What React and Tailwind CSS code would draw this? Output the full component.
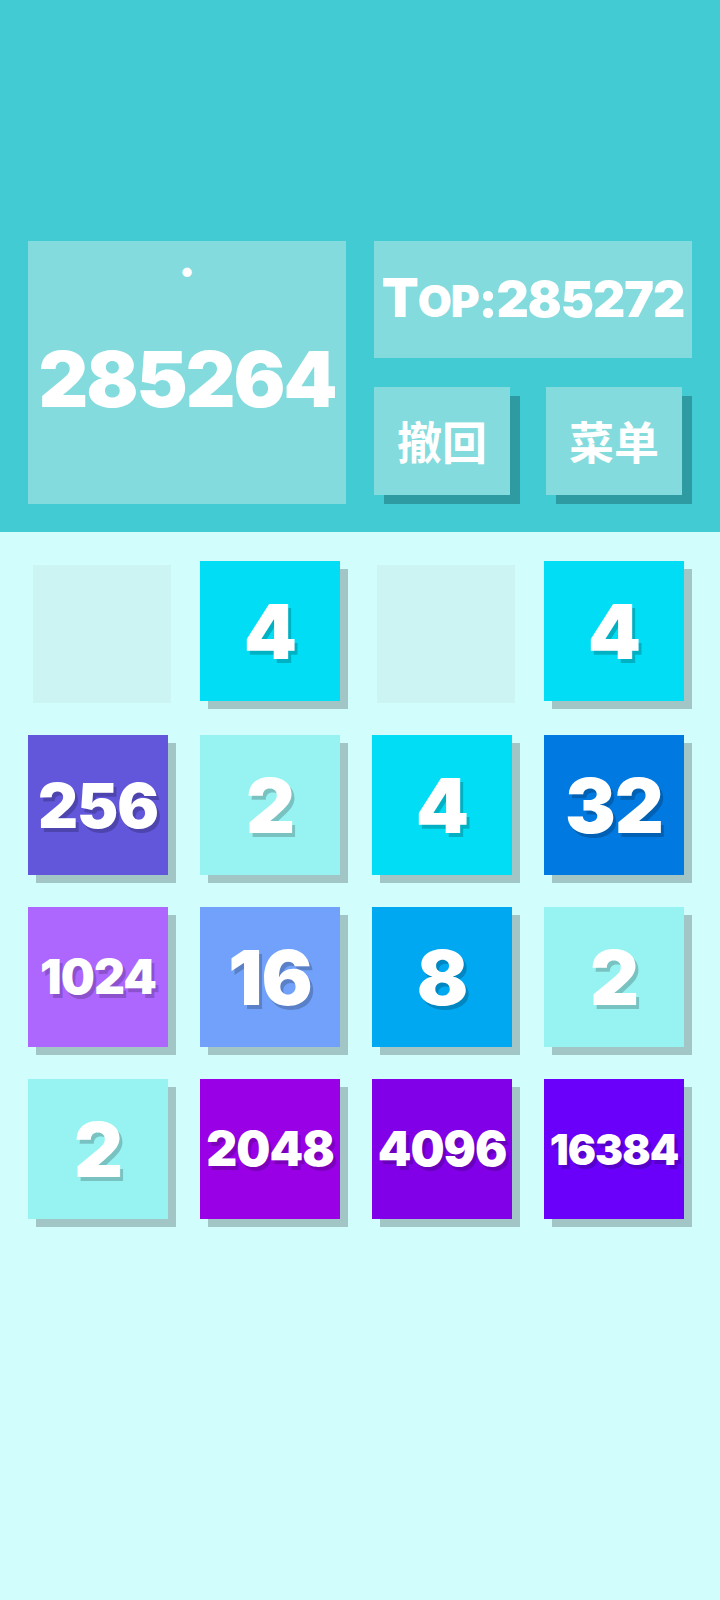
import React from 'react';

const tileColors = {
  2: 'bg-[#97f3f2]',
  4: 'bg-[#00ddf4]',
  8: 'bg-[#00a8f1]',
  16: 'bg-[#71a1fa]',
  32: 'bg-[#0079e0]',
  256: 'bg-[#6256da]',
  1024: 'bg-[#ad66fe]',
  2048: 'bg-[#9900e6]',
  4096: 'bg-[#8200e8]',
  16384: 'bg-[#6a00fa]',
};

const sizeFor = (v) => {
  const len = String(v).length;
  if (len <= 2) return 'text-[76px]';
  if (len === 3) return 'text-[62px]';
  if (len === 4) return 'text-[48px]';
  return 'text-[42px]';
};

const board = [
  [0, 4, 0, 4],
  [256, 2, 4, 32],
  [1024, 16, 8, 2],
  [2, 2048, 4096, 16384],
];

const numFont = { fontFamily: 'Inter, "DejaVu Sans", sans-serif' };

const Tile = ({ value }) => {
  if (!value) {
    return <div className="ml-[5px] mt-[4px] w-[138px] h-[138px] bg-[#cbf4f3]" />;
  }
  return (
    <div
      className={`w-[140px] h-[140px] flex items-center justify-center text-white font-black tracking-[-1px] shadow-[8px_8px_0_#a2c6c6] [text-shadow:3px_4px_0_rgba(0,0,0,0.2)] ${tileColors[value]} ${sizeFor(value)}`}
      style={numFont}
    >
      {value}
    </div>
  );
};

export default function App() {
  return (
    <div className="w-[720px] min-h-[1600px] bg-[#d2fdfd]">
      <div className="bg-[#42cbd3] pt-[241px] px-[28px] pb-[28px] grid grid-cols-2 gap-[28px]">
        <div className="h-[263px] bg-[#84dbdd] flex flex-col items-center">
          <span className="mt-[14px] text-white text-[30px] leading-[30px] font-black" style={numFont}>•</span>
          <div className="mt-[56px] text-white text-[77px] leading-none font-black tracking-[-2px]" style={numFont}>
            285264
          </div>
        </div>
        <div className="flex flex-col">
          <div className="h-[117px] bg-[#84dbdd] flex items-baseline justify-center pt-[30px] text-white text-[54px] leading-none font-black tracking-[-1px]" style={numFont}>
            <span>T</span>
            <span className="uppercase text-[44px]">op</span>
            <span className="text-[50px]">:285272</span>
          </div>
          <div className="mt-[29px] flex justify-between">
            {['撤回', '菜单'].map((t) => (
              <div key={t} className="w-[146px]">
                <div
                  className="w-[136px] h-[108px] bg-[#84dbdd] shadow-[10px_9px_0_#2e9ba3] flex items-center justify-center text-white text-[45px] font-bold"
                  style={{ fontFamily: '"Noto Sans CJK SC", "Noto Sans", sans-serif' }}
                >
                  {t}
                </div>
              </div>
            ))}
          </div>
        </div>
      </div>
      <div className="pt-[29px] px-[28px] grid grid-cols-[repeat(4,140px)] gap-[32px]">
        {board.flat().map((v, i) => (
          <Tile key={i} value={v} />
        ))}
      </div>
    </div>
  );
}
